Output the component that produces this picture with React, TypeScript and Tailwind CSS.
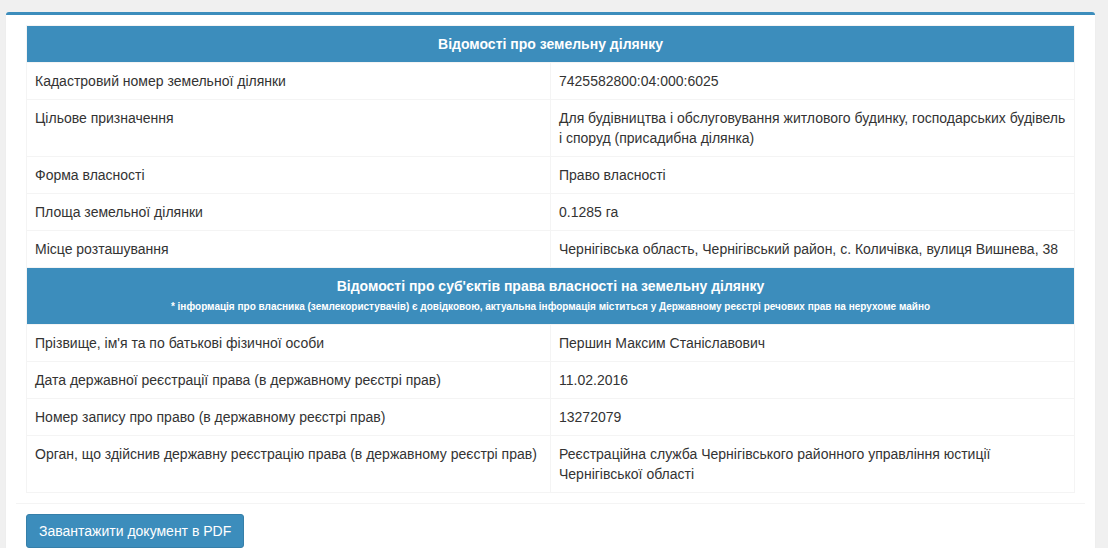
const landRows: [string, string][] = [
  ["Кадастровий номер земельної ділянки", "7425582800:04:000:6025"],
  ["Цільове призначення", "Для будівництва і обслуговування житлового будинку, господарських будівель і споруд (присадибна ділянка)"],
  ["Форма власності", "Право власності"],
  ["Площа земельної ділянки", "0.1285 га"],
  ["Місце розташування", "Чернігівська область, Чернігівський район, с. Количівка, вулиця Вишнева, 38"],
]

const ownerRows: [string, string][] = [
  ["Прізвище, ім'я та по батькові фізичної особи", "Першин Максим Станіславович"],
  ["Дата державної реєстрації права (в державному реєстрі прав)", "11.02.2016"],
  ["Номер запису про право (в державному реєстрі прав)", "13272079"],
  ["Орган, що здійснив державну реєстрацію права (в державному реєстрі прав)", "Реєстраційна служба Чернігівського районного управління юстиції Чернігівської області"],
]

function Rows({ rows }: { rows: [string, string][] }) {
  return (
    <>
      {rows.map(([label, value]) => (
        <tr key={label}>
          <td className="w-1/2 border border-[#f4f4f4] px-2 py-2 align-top">{label}</td>
          <td className="w-1/2 border border-[#f4f4f4] px-2 py-2 align-top">{value}</td>
        </tr>
      ))}
    </>
  )
}

export default function App() {
  return (
    <div className="min-h-[548px] bg-[#f0f0f0] pt-3 pl-[6px] pr-[13px] text-[14px] leading-5 text-[#333] [font-family:'Liberation_Sans',Arial,sans-serif]">
      <div className="rounded-t-[3px] border-t-[3px] border-[#3c8dbc] bg-white shadow-[0_1px_1px_rgba(0,0,0,0.1)]">
        <div className="px-5 pt-[10px] pb-[10px]">
          <table className="w-full border-collapse border border-[#f4f4f4]">
            <tbody>
              <tr>
                <td colSpan={2} className="bg-[#3c8dbc] px-2 py-2 text-center font-bold text-white">
                  Відомості про земельну ділянку
                </td>
              </tr>
              <Rows rows={landRows} />
              <tr>
                <td colSpan={2} className="bg-[#3c8dbc] px-2 pt-2 pb-[6px] text-center font-bold text-white">
                  <div>Відомості про суб'єктів права власності на земельну ділянку</div>
                  <div className="text-[10px] leading-[22px]">
                    * інформація про власника (землекористувачів) є довідковою, актуальна інформація міститься у Державному реєстрі речових прав на нерухоме майно
                  </div>
                </td>
              </tr>
              <Rows rows={ownerRows} />
            </tbody>
          </table>
        </div>
        <div className="mx-[10px] border-t border-[#f4f4f4] px-[10px] pt-[10px] pb-[10px]">
          <button className="rounded-[3px] border border-[#367fa9] bg-[#3c8dbc] px-3 py-[6px] text-[14px] leading-5 text-white">
            Завантажити документ в PDF
          </button>
        </div>
      </div>
    </div>
  )
}
